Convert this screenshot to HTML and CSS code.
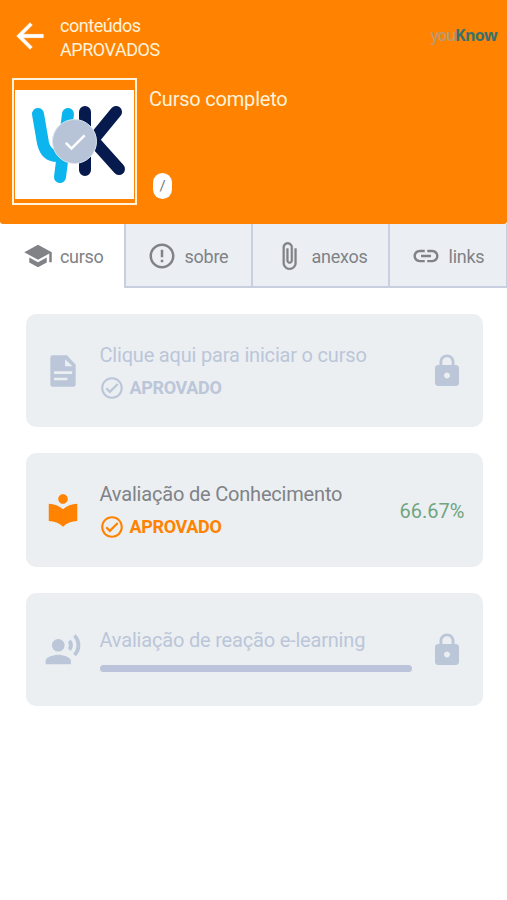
FILE: index.html
```
<!DOCTYPE html>
<html lang="pt-BR">
<head>
<meta charset="utf-8">
<title>Curso completo</title>
<link rel="stylesheet" href="styles.css">
</head>
<body>
<header class="header">
  <div class="topbar">
    <svg class="back" viewBox="0 0 24 24"><path d="M20 11H7.830l5.590-5.590L12 4l-8 8 8 8 1.410-1.410L7.830 13H20v-2z"/></svg>
    <div class="heading"><div class="lower">conteúdos</div><div class="upper">APROVADOS</div></div>
    <div class="brand"><span class="brand-you">you</span><span class="brand-know">Know</span></div>
  </div>
  <div class="course">
    <div class="thumb">
      <svg class="logo" viewBox="0 0 119 109">
        <g fill="none" stroke-linecap="round" stroke-linejoin="round" stroke-width="12">
          <path stroke="#0db5ef" d="M23 24l5 29q3 13 14 13h7M53 24l-8 63"/>
          <path stroke="#061a4d" d="M70 22v58M101 22L78 50l26 29"/>
        </g>
      </svg>
      <div class="done"><svg viewBox="0 0 24 24"><path d="M9 16.170L4.830 12l-1.420 1.410L9 19 21 7l-1.410-1.410z"/></svg></div>
    </div>
    <div class="course-info"><div class="course-title">Curso completo</div><div class="pill">/</div></div>
  </div>
</header>
<nav class="tabs">
  <div class="tab active"><svg viewBox="0 0 24 24"><path d="M5 13.180v4L12 21l7-3.820v-4L12 17l-7-3.820zM12 3L1 9l11 6 9-4.910V17h2V9L12 3z"/></svg><span>curso</span></div>
  <div class="tab"><svg viewBox="0 0 24 24"><path d="M11 15h2v2h-2zm0-8h2v6h-2zm.99-5C6.470 2 2 6.480 2 12s4.470 10 9.990 10C17.520 22 22 17.520 22 12S17.520 2 11.990 2zM12 20c-4.420 0-8-3.580-8-8s3.580-8 8-8 8 3.580 8 8-3.580 8-8 8z"/></svg><span>sobre</span></div>
  <div class="tab"><svg class="clip" viewBox="0 0 24 24"><path d="M16.500 6v11.500c0 2.210-1.790 4-4 4s-4-1.790-4-4V5c0-1.380 1.120-2.500 2.500-2.500s2.500 1.120 2.500 2.500v10.500c0 .55-.45 1-1 1s-1-.45-1-1V6H10v9.500c0 1.380 1.120 2.500 2.500 2.500s2.500-1.120 2.500-2.500V5c0-2.210-1.790-4-4-4S7 2.790 7 5v12.500c0 3.040 2.460 5.500 5.500 5.500s5.500-2.460 5.500-5.500V6h-1.500z"/></svg><span>anexos</span></div>
  <div class="tab"><svg viewBox="0 0 24 24"><path d="M3.900 12c0-1.710 1.390-3.100 3.100-3.100h4V7H7c-2.760 0-5 2.240-5 5s2.240 5 5 5h4v-1.900H7c-1.710 0-3.100-1.390-3.100-3.100zM8 13h8v-2H8v2zm9-6h-4v1.900h4c1.710 0 3.100 1.390 3.100 3.100s-1.390 3.100-3.100 3.100h-4V17h4c2.760 0 5-2.240 5-5s-2.240-5-5-5z"/></svg><span>links</span></div>
</nav>
<main class="cards">
  <section class="card locked">
    <svg class="kind" viewBox="0 0 24 24"><path fill-rule="evenodd" d="M14.500 2H5.500Q4 2 4 3.500v17Q4 22 5.500 22h13q1.500 0 1.500-1.500V8zM6.300 12.200h11.500v1.700H6.300zM6.300 16.200h8.500v1.700H6.300zM13.300 4.500L18 9h-4.700z"/></svg>
    <div class="body"><div class="title">Clique aqui para iniciar o curso</div>
      <div class="status"><svg viewBox="0 0 24 24"><path d="M16.590 7.580L10 14.170l-2.590-2.580L6 13l4 4 8-8zM12 2C6.480 2 2 6.480 2 12s4.480 10 10 10 10-4.480 10-10S17.520 2 12 2zm0 18c-4.420 0-8-3.580-8-8s3.580-8 8-8 8 3.580 8 8-3.580 8-8 8z"/></svg><span>APROVADO</span></div></div>
    <svg class="lock" viewBox="0 0 24 24"><path d="M18 8h-1V6c0-2.760-2.240-5-5-5S7 3.240 7 6v2H6c-1.100 0-2 .9-2 2v10c0 1.100.9 2 2 2h12c1.100 0 2-.9 2-2V10c0-1.100-.9-2-2-2zm-6 9c-1.100 0-2-.9-2-2s.9-2 2-2 2 .9 2 2-.9 2-2 2zm3.100-9H8.900V6c0-1.710 1.390-3.100 3.100-3.100s3.100 1.390 3.100 3.100v2z"/></svg>
  </section>
  <section class="card approved">
    <svg class="kind" viewBox="0 0 24 24"><path d="M12 11.550C9.640 9.350 6.480 8 3 8v11c3.480 0 6.640 1.350 9 3.550 2.360-2.190 5.520-3.550 9-3.550V8c-3.480 0-6.640 1.350-9 3.550zM12 8c1.660 0 3-1.340 3-3s-1.340-3-3-3-3 1.340-3 3 1.340 3 3 3z"/></svg>
    <div class="body"><div class="title">Avaliação de Conhecimento</div>
      <div class="status"><svg viewBox="0 0 24 24"><path d="M16.590 7.580L10 14.170l-2.590-2.580L6 13l4 4 8-8zM12 2C6.480 2 2 6.480 2 12s4.480 10 10 10 10-4.480 10-10S17.520 2 12 2zm0 18c-4.420 0-8-3.580-8-8s3.580-8 8-8 8 3.580 8 8-3.580 8-8 8z"/></svg><span>APROVADO</span></div></div>
    <div class="score">66.67%</div>
  </section>
  <section class="card locked">
    <svg class="kind" viewBox="0 0 24 24"><circle cx="9" cy="9" r="4"/><path d="M9 15c-2.670 0-8 1.340-8 4v2h16v-2c0-2.660-5.330-4-8-4zM16.760 5.360l-1.680 1.690c.84 1.180.84 2.710 0 3.890l1.680 1.690c2.020-2.020 2.020-5.070 0-7.270zM20.070 2l-1.630 1.630c2.770 3.020 2.770 7.560 0 10.740L20.070 16c3.900-3.890 3.910-9.950 0-14z"/></svg>
    <div class="body"><div class="title">Avaliação de reação e-learning</div><div class="progress"></div></div>
    <svg class="lock" viewBox="0 0 24 24"><path d="M18 8h-1V6c0-2.760-2.240-5-5-5S7 3.240 7 6v2H6c-1.100 0-2 .9-2 2v10c0 1.100.9 2 2 2h12c1.100 0 2-.9 2-2V10c0-1.100-.9-2-2-2zm-6 9c-1.100 0-2-.9-2-2s.9-2 2-2 2 .9 2 2-.9 2-2 2zm3.100-9H8.900V6c0-1.710 1.390-3.100 3.100-3.100s3.100 1.390 3.100 3.100v2z"/></svg>
  </section>
</main>
</body>
</html>
```
FILE: styles.css
```
* { box-sizing: border-box; }
body { margin: 0; background: #fff; font-family: Roboto, sans-serif; color: #808286; }
svg { display: block; flex: none; fill: currentColor; }
.header { height: 224px; background: #ff8200; color: #fff3dc; border-radius: 0 0 3px 3px; }
.topbar { display: flex; align-items: center; height: 73px; padding: 0 10px; }
.back { width: 40px; height: 40px; margin-top: -1px; color: #fff; stroke: currentColor; stroke-width: .3; }
.heading { margin-left: 10px; font-size: 18px; line-height: 24px; padding-top: 2px; flex: 1; }
.lower { letter-spacing: -0.45px; }
.upper { letter-spacing: -0.45px; }
.brand { font: bold 16px/20px "Open Sans", sans-serif; letter-spacing: -0.7px; padding-bottom: 3px; }
.brand-you { color: #b99a70; font-weight: 600; letter-spacing: -1.3px; }
.brand-know { color: #39716f; }
.course { display: flex; gap: 12px; padding: 5px 12px; }
.thumb { position: relative; width: 125px; height: 127px; border: 2px solid #fff3dc; padding: 10px 1px 5px; }
.logo { width: 119px; height: 109px; background: #fff; }
.done { position: absolute; left: 38px; top: 39px; width: 45px; height: 45px; border-radius: 50%; background: #b7c4d8; border: 1px solid #dce4ed; color: #fff; display: flex; align-items: center; justify-content: center; }
.done svg { width: 28px; height: 28px; }
.course-info { display: flex; flex-direction: column; justify-content: space-between; align-items: flex-start; padding: 8px 0 6px; }
.course-title { font-size: 20px; line-height: 26px; letter-spacing: -0.2px; }
.pill { width: 19px; height: 26px; margin-left: 4px; border-radius: 10px; background: #fff; color: #777; font-size: 15px; line-height: 27px; text-align: center; }
.tabs { display: grid; grid-template-columns: 124px 127px 137px 119px; height: 64px; }
.tab { display: flex; align-items: center; background: #ebeff3; border-left: 2px solid #c8cfdf; border-bottom: 2px solid #c8cfdf; padding: 2px 0 0 21px; font-size: 18px; letter-spacing: -0.25px; color: #808286; }
.tab svg { width: 30px; height: 30px; margin-right: 7.500px; }
.tab .clip { stroke: currentColor; stroke-width: .3; }
.tab.active { background: #fff; border: 0; padding: 0 0 0 23px; letter-spacing: -0.3px; }
.tab.active svg { margin-right: 7px; }
.tab:last-child { border-right: 1px solid #c8cfdf; }
.cards { display: flex; flex-direction: column; gap: 26px; padding: 25.500px 24.500px 0 25.500px; }
.card { height: 113.500px; border-radius: 10px; background: #ebeff2; display: flex; align-items: center; padding: 1px 18px 0; }
.locked { color: #bbc6d9; }
.approved { color: #ff8200; }
.kind { width: 38px; height: 38px; }
.body { flex: 1; margin-left: 18px; }
.title { font-size: 20px; line-height: 28px; letter-spacing: -0.19px; white-space: nowrap; }
.approved .title { color: #808286; }
.status { display: flex; align-items: center; gap: 5px; margin: 6px 0 0 -1px; font-size: 18px; line-height: 26px; font-weight: 700; letter-spacing: -0.35px; }
.status svg { width: 26px; height: 26px; }
.lock { width: 36px; height: 36px; }
.score { font-size: 20px; padding-top: 1px; color: #70a580; }
.progress { width: 312px; height: 7px; margin: 11px 0 2px; border-radius: 4px; background: #bbc4db; }
```
